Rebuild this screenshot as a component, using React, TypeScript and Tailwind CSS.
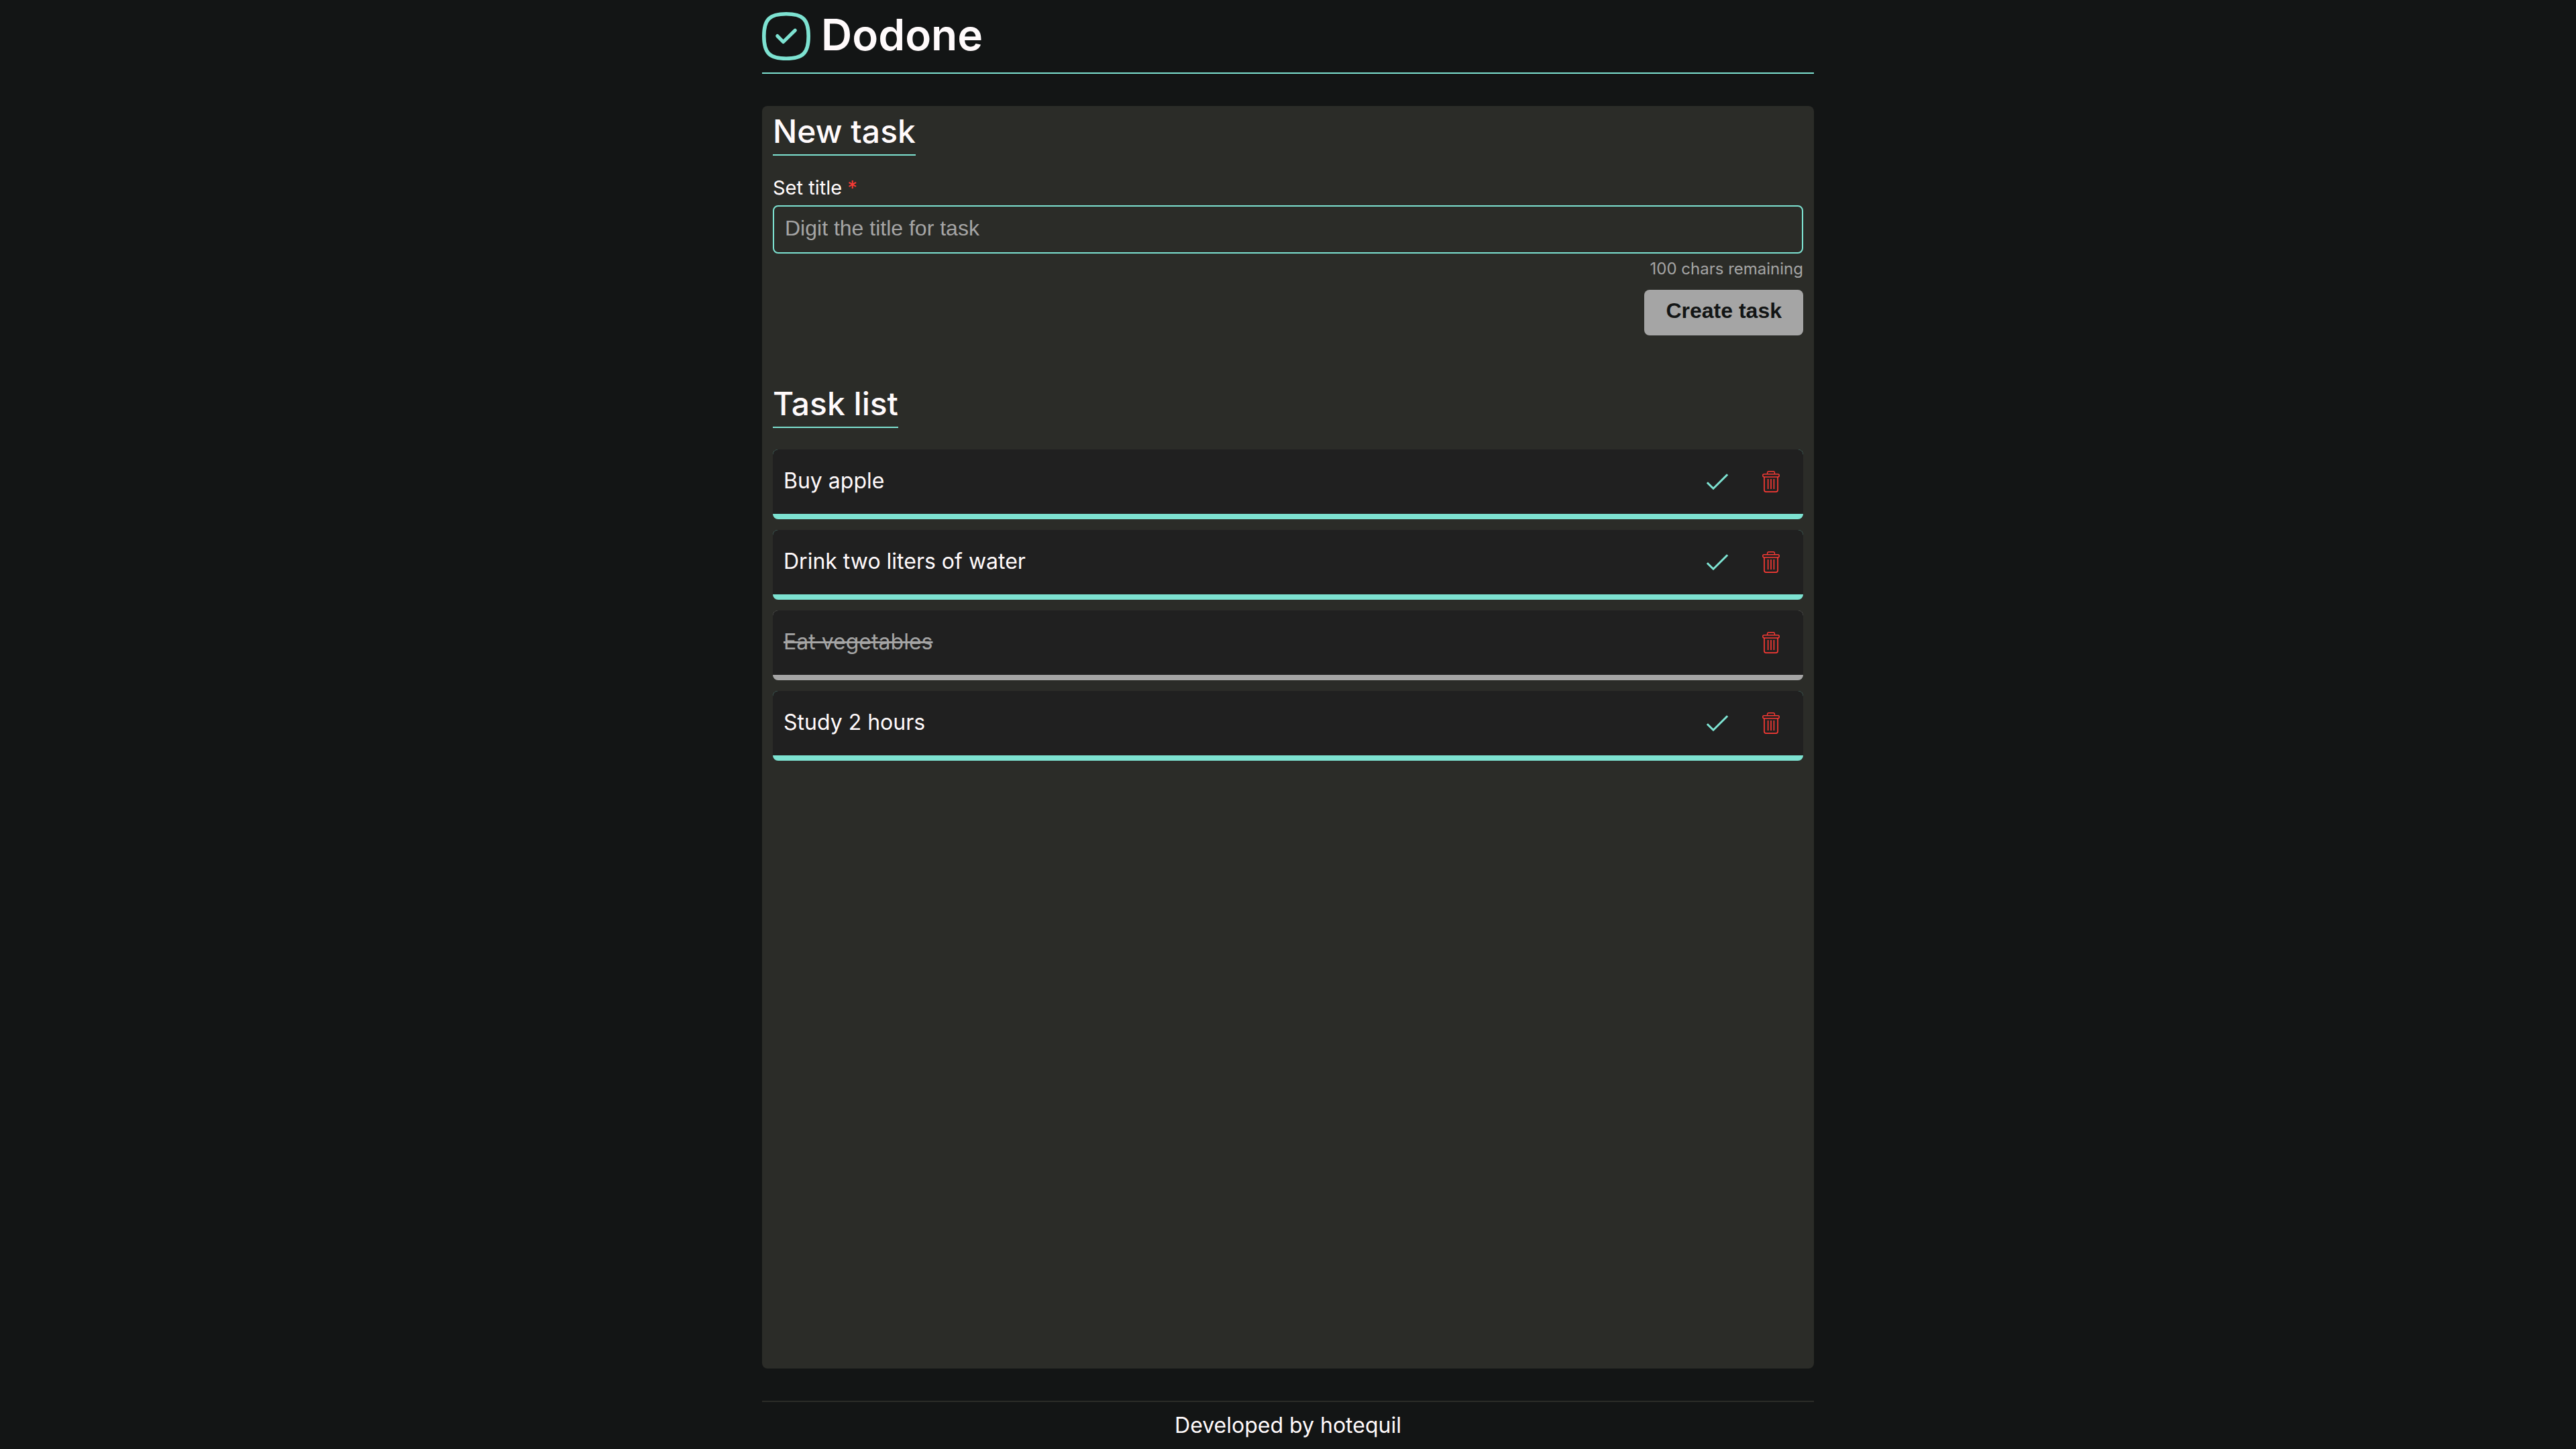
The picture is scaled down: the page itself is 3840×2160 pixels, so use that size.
import { useState } from "react";

type Task = { id: number; title: string; done: boolean };

const initialTasks: Task[] = [
  { id: 1, title: "Buy apple", done: false },
  { id: 2, title: "Drink two liters of water", done: false },
  { id: 3, title: "Eat vegetables", done: true },
  { id: 4, title: "Study 2 hours", done: false },
];

const MAX_CHARS = 100;

function Logo() {
  return (
    <svg viewBox="0 0 72 72" className="size-[72px]" fill="none" stroke="#7de2d1" strokeLinecap="round" strokeLinejoin="round" aria-hidden="true">
      <path strokeWidth="5.6" d="M36 2.8C61 2.8 69.2 11 69.2 36S61 69.2 36 69.2 2.8 61 2.8 36 11 2.8 36 2.8Z" />
      <path strokeWidth="5.2" d="M22.8 35.600 31.600 44.500 49.300 27.200" />
    </svg>
  );
}

function CheckIcon() {
  return (
    <svg viewBox="0 0 32 32" className="size-8" fill="none" stroke="#7de2d1" strokeWidth="3" aria-hidden="true">
      <path d="M.9 17.200 10 26.200 31.100 5.200" />
    </svg>
  );
}

function BinIcon() {
  return (
    <svg viewBox="0 0 32 32" className="size-8" fill="none" stroke="#f93a35" aria-hidden="true">
      <path strokeWidth="1.400" d="M10.600 4.500V2.600Q10.600 .8 12.400 .8H19.600Q21.400 .8 21.400 2.600V4.500" />
      <rect strokeWidth="1.500" x="3.800" y="4.700" width="24.400" height="4.200" rx="1.800" />
      <path strokeWidth="1.700" d="M5.900 8.900V28.300Q5.900 31.100 8.700 31.100H23.300Q26.100 31.100 26.100 28.300V8.900" />
      <path strokeWidth="1.700" d="M11.600 12V27M16 12V27M20.400 12V27" />
    </svg>
  );
}

function SectionTitle({ children }: { children: string }) {
  return (
    <h2 className="w-fit border-b-2 border-[#7de2d1] pb-1 text-5xl leading-[60px] font-medium">
      {children}
    </h2>
  );
}

export default function App() {
  const [tasks, setTasks] = useState(initialTasks);
  const [title, setTitle] = useState("");

  const createTask = () => {
    if (!title.trim()) return;
    setTasks([...tasks, { id: Date.now(), title: title.trim(), done: false }]);
    setTitle("");
  };

  return (
    <div className="min-h-screen bg-[#131515] font-['Inter',sans-serif] text-[#fffafb]">
      <div className="mx-auto flex min-h-screen w-full max-w-[1568px] flex-col">
        <header className="flex items-center gap-4 border-b-2 border-[#7de2d1] py-[18px]">
          <Logo />
          <h1 className="-my-1 pb-1 text-[64px] leading-[76px] font-semibold">Dodone</h1>
        </header>

        <main className="my-12 flex-1 rounded-lg bg-[#2b2c28] px-4 pt-2">
          <SectionTitle>New task</SectionTitle>
          <form
            className="mt-8 flex flex-col"
            onSubmit={(event) => {
              event.preventDefault();
              createTask();
            }}
          >
            <label htmlFor="title" className="text-[29px] leading-8">
              Set title <span className="text-[#f93a35]">*</span>
            </label>
            <input
              id="title"
              maxLength={MAX_CHARS}
              value={title}
              onChange={(event) => setTitle(event.target.value)}
              placeholder="Digit the title for task"
              className="mt-[10px] h-[72px] rounded-lg border-2 border-[#7de2d1] bg-transparent px-4 pb-1 font-['Liberation_Sans',sans-serif] text-[32px] outline-none placeholder:text-[#a5a5a5]"
            />
            <p className="mt-2 text-right text-2xl leading-[30px] text-[#a5a5a5]">
              {MAX_CHARS - title.length} chars remaining
            </p>
            <button
              type="submit"
              className="mt-4 h-[68px] self-end rounded-lg bg-[#a5a5a5] px-8 pb-1.5 font-['Liberation_Sans',sans-serif] text-[32px] font-bold text-[#131515]"
            >
              Create task
            </button>
          </form>

          <section className="mt-[72px]">
            <SectionTitle>Task list</SectionTitle>
            <ul className="mt-8 flex flex-col gap-4">
              {tasks.map((task) => (
                <li
                  key={task.id}
                  className={
                    task.done
                      ? "overflow-hidden rounded-lg bg-[#a5a5a5] pb-2 text-[#a5a5a5]"
                      : "overflow-hidden rounded-lg bg-[#7de2d1] pb-2"
                  }
                >
                  <div className="flex h-24 items-center bg-[#202020] px-4">
                    <span
                      className={
                        task.done
                          ? "flex-1 pb-0.5 text-[32px] leading-[38px] line-through"
                          : "flex-1 pb-0.5 text-[32px] leading-[38px]"
                      }
                    >
                      {task.title}
                    </span>
                    {!task.done && (
                      <button
                        type="button"
                        aria-label={`Complete ${task.title}`}
                        className="flex size-16 items-center justify-center"
                        onClick={() => setTasks(tasks.map((t) => (t.id === task.id ? { ...t, done: true } : t)))}
                      >
                        <CheckIcon />
                      </button>
                    )}
                    <button
                      type="button"
                      aria-label={`Delete ${task.title}`}
                      className="ml-4 flex size-16 items-center justify-center"
                      onClick={() => setTasks(tasks.filter((t) => t.id !== task.id))}
                    >
                      <BinIcon />
                    </button>
                  </div>
                </li>
              ))}
            </ul>
          </section>
        </main>

        <footer className="border-t-2 border-[#2b2c28] py-4 text-center text-[32px] leading-[38px]">
          Developed by hotequil
        </footer>
      </div>
    </div>
  );
}
